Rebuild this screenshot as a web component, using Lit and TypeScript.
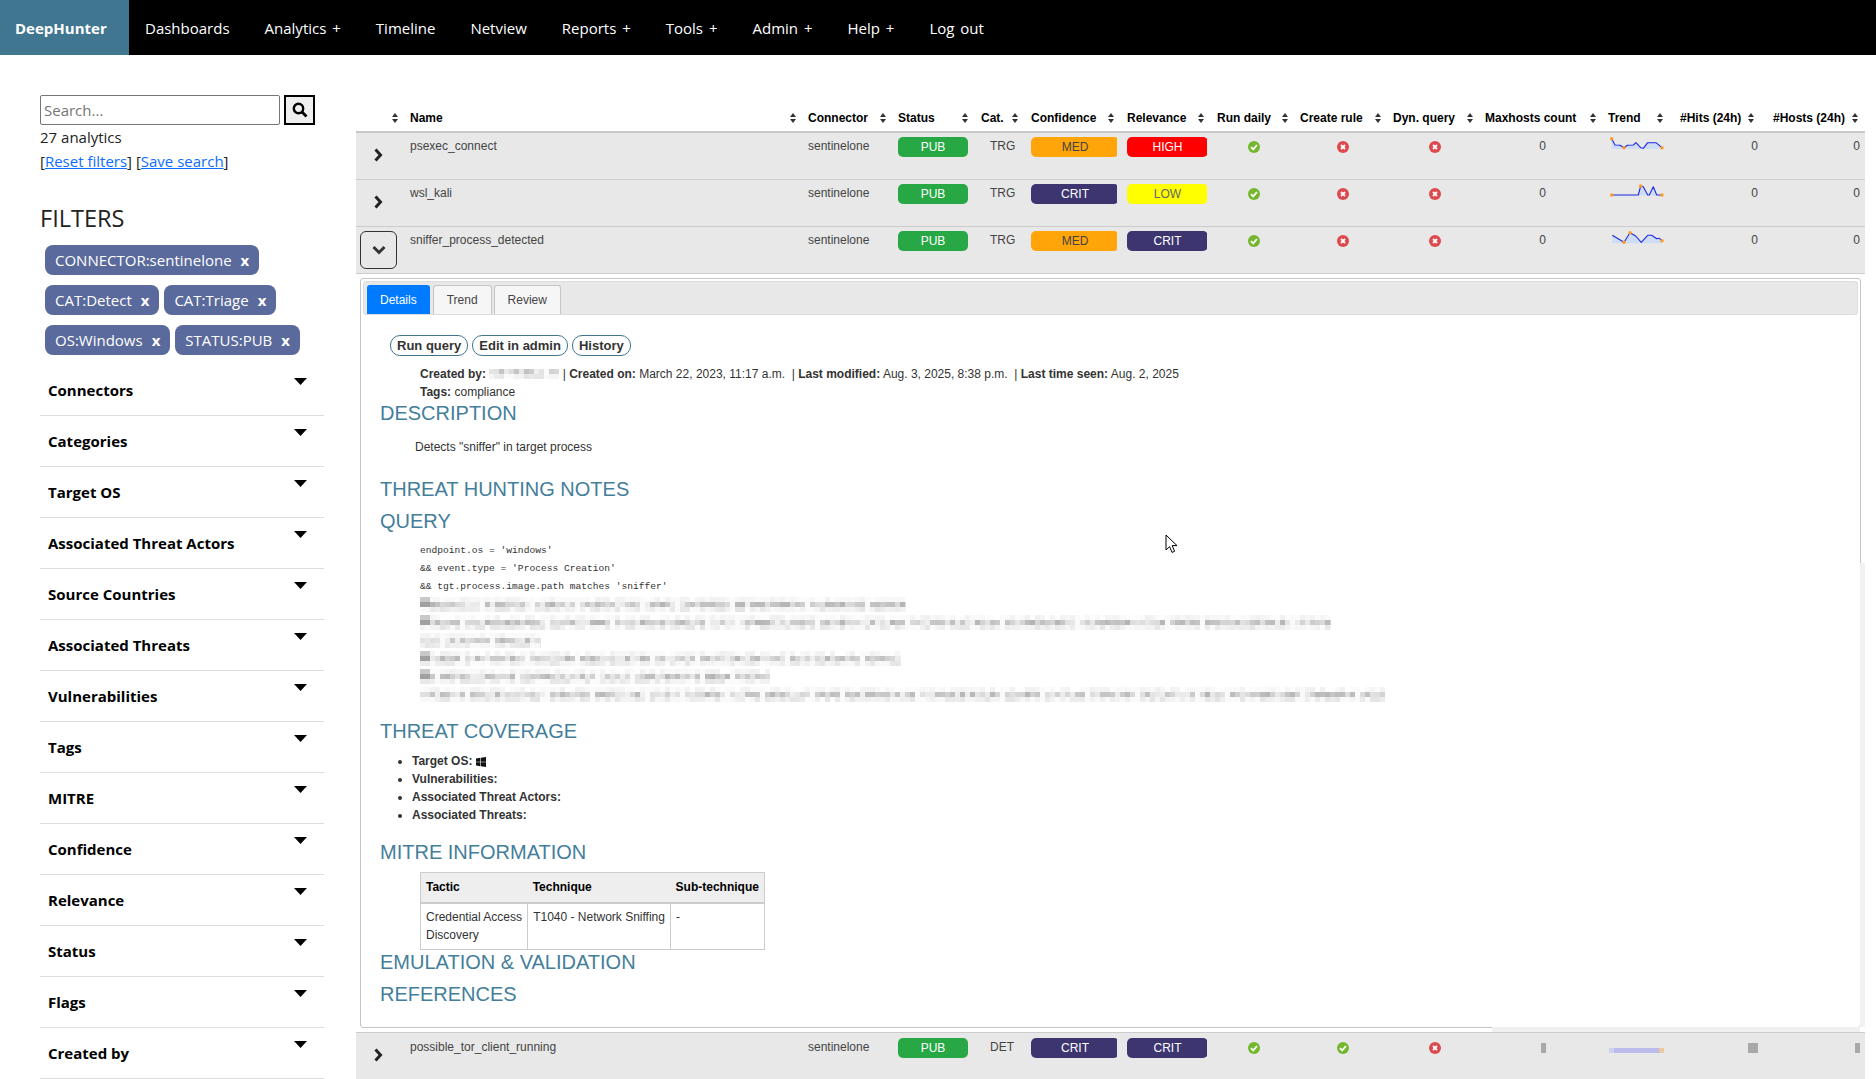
import { LitElement, html, svg, css } from "lit";
import { customElement } from "lit/decorators.js";

interface Col { label: string; width: number; arrowPad: number }
interface Row {
  name: string; cat: string; conf: string; rel: string;
  daily: boolean; rule: boolean; dyn: boolean;
  points: number[][]; dots: number[]; floor: number; open?: boolean; fuzzy?: boolean;
}

const NAV = ["Dashboards", "Analytics +", "Timeline", "Netview", "Reports +", "Tools +", "Admin +", "Help +", "Log out"];
const FILTERS = ["Connectors", "Categories", "Target OS", "Associated Threat Actors", "Source Countries", "Associated Threats", "Vulnerabilities", "Tags", "MITRE", "Confidence", "Relevance", "Status", "Flags", "Created by"];
const PILLS = [["CONNECTOR:sentinelone"], ["CAT:Detect", "CAT:Triage"], ["OS:Windows", "STATUS:PUB"]];

const COLS: Col[] = [
  { label: "", width: 44, arrowPad: 2 },
  { label: "Name", width: 398, arrowPad: 2 },
  { label: "Connector", width: 90, arrowPad: 2 },
  { label: "Status", width: 83, arrowPad: 3 },
  { label: "Cat.", width: 50, arrowPad: 3 },
  { label: "Confidence", width: 96, arrowPad: 3 },
  { label: "Relevance", width: 90, arrowPad: 3 },
  { label: "Run daily", width: 83, arrowPad: 2 },
  { label: "Create rule", width: 93, arrowPad: 2 },
  { label: "Dyn. query", width: 92, arrowPad: 2 },
  { label: "Maxhosts count", width: 123, arrowPad: 2 },
  { label: "Trend", width: 72, arrowPad: 7 },
  { label: "#Hits (24h)", width: 93, arrowPad: 9 },
  { label: "#Hosts (24h)", width: 102, arrowPad: 7 },
];

const ROWS: Row[] = [
  { name: "psexec_connect", cat: "TRG", conf: "MED", rel: "HIGH", daily: true, rule: false, dyn: false,
    points: [[2.7, 1.7], [6, 8], [11, 8.3], [15, 10.7], [18.3, 8.3], [24.3, 8], [27, 5.7], [31.7, 10.7], [34.3, 11.3], [38.7, 5.7], [47, 5.7], [53, 10.7]],
    dots: [0, 3, 11], floor: 12 },
  { name: "wsl_kali", cat: "TRG", conf: "CRIT", rel: "LOW", daily: true, rule: false, dyn: false,
    points: [[2.7, 11], [29.3, 11], [31.7, 2], [34.3, 2.7], [38.7, 11], [40.3, 11], [44.3, 2.7], [47.7, 11], [53, 11]],
    dots: [0, 2, 8], floor: 11.5 },
  { name: "sniffer_process_detected", cat: "TRG", conf: "MED", rel: "CRIT", daily: true, rule: false, dyn: false, open: true,
    points: [[3.3, 4.3], [15, 11.3], [21, 1.7], [26.7, 5], [32.3, 11.3], [38.7, 4.3], [42.7, 4.3], [47.7, 7.7], [50.3, 7.3], [53, 9.7]],
    dots: [1, 2, 9], floor: 12.3 },
];
const LAST: Row = { name: "possible_tor_client_running", cat: "DET", conf: "CRIT", rel: "CRIT", daily: true, rule: true, dyn: false, fuzzy: true, points: [], dots: [], floor: 0 };

const QUERY = ["endpoint.os = 'windows'", "&& event.type = 'Process Creation'", "&& tgt.process.image.path matches 'sniffer'"];
const BLURRED = [486, 911, 121, 481, 350, 965];

// the reference pixelates these lines, so tiles stand in for the hidden text
function mosaic(width: number, lead: boolean, rows = 3) {
  let seed = width * 7 + 3;
  const next = () => (seed = (seed * 9301 + 49297) % 233280) / 233280;
  const ranges = [[240, 255], [180, 240], [228, 252]].slice(3 - rows);
  const tiles = [];
  let word = 3 + Math.floor(next() * 10);
  for (let i = 0; i * 5 < width; i++) {
    const gap = word-- <= 0;
    if (gap) word = 5 + Math.floor(next() * 14);
    for (let r = 0; r < rows; r++) {
      const [lo, hi] = ranges[r];
      let v = gap ? 250 : Math.round(lo + next() * (hi - lo));
      if (lead && i < 2 && r < rows - 1) v = r === rows - 2 ? 160 : 200;
      tiles.push(svg`<rect x=${i * 5} y=${r * 5} width="5" height="5" fill=${`rgb(${v},${v},${v})`}></rect>`);
    }
  }
  return html`<svg class="mosaic" width=${width} height=${rows * 5}>${tiles}</svg>`;
}

const sortArrows = html`<svg class="sort" width="6" height="10" viewBox="0 0 6 10"><path d="M3 0 6 4H0zM3 10 0 6H6z" fill="#333"></path></svg>`;
const chevRight = html`<svg width="10" height="14" viewBox="0 0 10 14"><path d="M2.5 1.5 7.5 7 2.5 12.5" fill="none" stroke="#222" stroke-width="3"></path></svg>`;
const chevDown = html`<svg width="14" height="10" viewBox="0 0 14 10"><path d="M1.5 2 7 7.5 12.5 2" fill="none" stroke="#333" stroke-width="3"></path></svg>`;

function flag(on: boolean) {
  return on
    ? html`<svg class="flag" width="12" height="12" viewBox="0 0 12 12"><circle cx="6" cy="6" r="6" fill="#74b72e"></circle><path d="M3 6.2 5.2 8.4 9 4" fill="none" stroke="#fff" stroke-width="1.8"></path></svg>`
    : html`<svg class="flag" width="12" height="12" viewBox="0 0 12 12"><circle cx="6" cy="6" r="6" fill="#dc4a4f"></circle><path d="M4 4 8 8M8 4 4 8" fill="none" stroke="#fff" stroke-width="1.8"></path></svg>`;
}

function spark(r: Row) {
  const line = r.points.map((p) => p.join(",")).join(" ");
  const area = `${r.points[0][0]},${r.floor} ${line} ${r.points[r.points.length - 1][0]},${r.floor}`;
  return html`<svg class="spark" width="56" height="16" viewBox="0 0 56 16">
    <polygon points=${area} fill="#cfdcf8"></polygon>
    <polyline points=${line} fill="none" stroke="#1c2be0" stroke-width="1.1" stroke-linejoin="round"></polyline>
    ${r.dots.map((i) => svg`<circle cx=${r.points[i][0]} cy=${r.points[i][1]} r="1.7" fill="#ff9a1f"></circle>`)}
  </svg>`;
}

@customElement("app-root")
export class AppRoot extends LitElement {
  static styles = css`
    :host {
      display: block;
      height: 1079px;
      overflow: hidden;
      position: relative;
      font-family: "Liberation Sans", Arial, sans-serif;
      color: #333;
      background: #fff;
    }

    .nav {
      display: flex;
      align-items: center;
      height: 55px;
      background: #000;
      font-family: "Open Sans", sans-serif;
      font-size: 15px;
    }
    .brand {
      display: flex;
      align-items: center;
      height: 100%;
      width: 129px;
      box-sizing: border-box;
      padding-left: 15px;
      background: #417690;
      color: #fff;
      font-weight: 700;
    }
    .nav-items {
      display: flex;
      gap: 35px;
      padding-left: 16px;
      color: #fff;
      word-spacing: 2px;
    }

    .page {
      display: flex;
      align-items: flex-start;
    }

    .side {
      width: 284px;
      margin-left: 40px;
      margin-right: 32px;
      padding-top: 40px;
      flex: none;
      font-family: "Open Sans", sans-serif;
      font-size: 15px;
      color: #222;
    }
    .search {
      display: flex;
      gap: 4px;
    }
    .search-input {
      width: 240px;
      height: 30px;
      box-sizing: border-box;
      border: 1px solid #767676;
      border-radius: 2px;
      padding: 0 3px;
      line-height: 28px;
      color: #757575;
    }
    .search-btn {
      display: flex;
      align-items: center;
      justify-content: center;
      width: 31px;
      height: 30px;
      box-sizing: border-box;
      border: 2px solid #000;
      background: #efefef;
    }
    .count { line-height: 24px; margin-top: 0; }
    .links { line-height: 24px; }
    .links a { color: #0d6efd; text-decoration: underline; }
    .filters-title {
      margin: 30px 0 0;
      font-size: 23.5px;
      font-weight: 500;
      line-height: 31px;
    }
    .pills {
      display: flex;
      flex-direction: column;
      gap: 10px;
      padding: 11px 0 0 5px;
    }
    .pill-row { display: flex; gap: 5px; }
    .pill {
      display: flex;
      gap: 9px;
      align-items: center;
      height: 30px;
      padding: 0 10px;
      border-radius: 8px;
      background: #5a6a9c;
      color: #fff;
    }
    .pill b { font-weight: 700; }
    .filter-list { margin-top: 10px; }
    .filter {
      display: flex;
      justify-content: space-between;
      height: 50px;
      border-bottom: 1px solid #ddd;
      padding-left: 8px;
      font-weight: 700;
      color: #000;
    }
    .filter span { padding-top: 15px; line-height: 21px; }
    .filter svg { margin: 13px 17px 0 0; }

    .content { width: 1509px; flex: none; padding-top: 55px; }
    table {
      width: 1509px;
      table-layout: fixed;
      border-collapse: separate;
      border-spacing: 0;
      font-size: 12px;
    }
    th {
      height: 21px;
      padding: 0 0 0 10px;
      border-bottom: 2px solid #c8c8c8;
      vertical-align: top;
      color: #000;
      text-align: left;
    }
    .th {
      display: flex;
      justify-content: space-between;
      align-items: center;
      height: 16px;
      white-space: nowrap;
    }
    .th span { flex: 1; }
    .sort { flex: none; }

    .row td {
      height: 42px;
      padding: 4px 0 0 10px;
      background: #e8e8e8;
      border-bottom: 1px solid #ccc;
      vertical-align: top;
      line-height: 18px;
      color: #444;
      white-space: nowrap;
    }
    .row.last td { padding-top: 5px; }
    .row td.tog { padding-left: 3px; padding-top: 3px; height: 43px; }
    .toggle {
      display: flex;
      align-items: center;
      justify-content: center;
      width: 37px;
      height: 38px;
      box-sizing: border-box;
      border: 1px solid transparent;
      border-radius: 6px;
    }
    .toggle.open { border-color: #333; margin: 1px 0 0 1px; }
    .row td.cat { padding-left: 19px; }
    .badge {
      height: 20px;
      line-height: 21px;
      border-radius: 5px;
      text-align: center;
    }
    .b-status { width: 70px; }
    .b-conf { width: 88px; }
    .b-rel { width: 81px; }
    .PUB { background: #28a745; color: #fff; }
    .MED { background: #ffa50a; color: #444; }
    .CRIT { background: #3c3570; color: #fff; }
    .HIGH { background: #ff0000; color: #fff; }
    .LOW { background: #ffff00; color: #666; }
    .flag { display: block; margin-top: 4px; }
    .row td.f-daily { padding-left: 41px; }
    .row td.f-rule { padding-left: 47px; }
    .row td.f-dyn { padding-left: 46px; }
    .row td.num { padding-left: 0; padding-right: 5px; text-align: right; }
    .row td.num-max { padding-right: 52px; }
    .row td.trend { padding-left: 11px; }
    .spark { display: block; }
    .smudge {
      display: inline-block;
      height: 10px;
      margin-top: 5px;
      background: #a9a9a9;
    }
    .flat {
      display: block;
      width: 55px;
      height: 5px;
      margin-top: 10px;
      background: linear-gradient(to right, #cfcff0 5px, #bcbcec 5px, #bcbcec 50px, #eec9a0 50px);
    }

    td.detail {
      padding: 4px;
      border-bottom: 1px solid #ccc;
    }
    .panel {
      height: 750px;
      box-sizing: border-box;
      border: 1px solid #c5c5c5;
      border-radius: 3px;
      padding: 2px;
      overflow: hidden;
    }
    .tabs {
      display: flex;
      align-items: flex-end;
      gap: 2px;
      height: 34px;
      box-sizing: border-box;
      padding-left: 3px;
      background: #e8e8e8;
      border: 1px solid #ddd;
      border-radius: 3px;
    }
    .tab {
      height: 29px;
      box-sizing: border-box;
      padding: 0 13px;
      line-height: 28px;
      border: 1px solid #c5c5c5;
      border-bottom: none;
      border-radius: 3px 3px 0 0;
      background: #f6f6f6;
      color: #454545;
    }
    .tab.active {
      padding: 0 12px;
      margin-right: 1px;
      background: #007bff;
      border-color: #007bff;
      color: #fff;
    }

    .body { padding: 20px 0 0 18px; color: #333; }
    .actions { display: flex; gap: 4px; padding-left: 9px; margin-bottom: 9px; }
    .action {
      height: 21px;
      box-sizing: border-box;
      padding: 0 6px;
      border: 1px solid #417690;
      border-radius: 10px;
      font-size: 13px;
      line-height: 19px;
      font-weight: 700;
      color: #333;
    }
    .meta { padding-left: 39px; line-height: 18px; white-space: nowrap; }
    .meta b { font-weight: 700; }
    .meta .mosaic { vertical-align: -1px; }
    .meta.tags { margin-bottom: 1px; }
    h2 {
      margin: 0 0 0 -1px;
      color: #447e9b;
      font-size: 20px;
      font-weight: 400;
      line-height: 22px;
    }
    .desc { padding-left: 34px; margin: 14px 0 22px; line-height: 18px; }
    .h-query { margin-top: 10px; }
    .code {
      margin: 10px 0 16px;
      padding-left: 39px;
      font-family: "Liberation Mono", monospace;
      font-size: 9.6px;
      line-height: 18px;
    }
    .code div { height: 18px; }
    .code .mosaic { display: block; padding-top: 1px; }
    ul {
      margin: 10px 0 17px;
      padding-left: 31px;
      font-weight: 700;
      line-height: 18px;
    }
    ul svg { vertical-align: -2px; }
    .mitre {
      width: 345px;
      margin: 9px 0 1px 39px;
      table-layout: auto;
      border-collapse: collapse;
    }
    .mitre th, .mitre td {
      padding: 2px 5px;
      border: 1px solid #ccc;
      line-height: 18px;
      vertical-align: top;
      white-space: nowrap;
      height: auto;
    }
    .mitre th {
      padding: 5px 5px 6px;
      background: #eee;
      border-width: 1px 0;
      border-bottom: 2px solid #ccc;
    }
    .mitre th:first-child { border-left: 1px solid #ccc; }
    .mitre th:last-child { border-right: 1px solid #ccc; }
    .mitre td { padding: 4px 5px 5px; }
    .h-ref { margin-top: 10px; }

    .cursor { position: absolute; left: 1165px; top: 534px; }
    .track-x {
      position: absolute;
      left: 1492px;
      top: 1027px;
      width: 368px;
      height: 5px;
      background: #f1f1f1;
    }
    .track-y {
      position: absolute;
      left: 1860px;
      top: 563px;
      width: 5px;
      height: 464px;
      background: #f1f1f1;
    }
  `;

  renderRow(r: Row, last = false) {
    return html`
      <tr class="row ${last ? "last" : ""}">
        <td class="tog"><div class="toggle ${r.open ? "open" : ""}">${r.open ? chevDown : chevRight}</div></td>
        <td>${r.name}</td>
        <td>sentinelone</td>
        <td><div class="badge b-status PUB">PUB</div></td>
        <td class="cat">${r.cat}</td>
        <td><div class="badge b-conf ${r.conf}">${r.conf}</div></td>
        <td><div class="badge b-rel ${r.rel}">${r.rel}</div></td>
        <td class="f-daily">${flag(r.daily)}</td>
        <td class="f-rule">${flag(r.rule)}</td>
        <td class="f-dyn">${flag(r.dyn)}</td>
        <td class="num num-max">${r.fuzzy ? html`<span class="smudge" style="width:5px"></span>` : "0"}</td>
        <td class="trend">${r.fuzzy ? html`<span class="flat"></span>` : spark(r)}</td>
        <td class="num">${r.fuzzy ? html`<span class="smudge" style="width:10px"></span>` : "0"}</td>
        <td class="num">${r.fuzzy ? html`<span class="smudge" style="width:5px"></span>` : "0"}</td>
      </tr>
    `;
  }

  renderDetail() {
    return html`
      <tr>
        <td class="detail" colspan="14">
          <div class="panel">
            <div class="tabs">
              <div class="tab active">Details</div>
              <div class="tab">Trend</div>
              <div class="tab">Review</div>
            </div>
            <div class="body">
              <div class="actions">
                <div class="action">Run query</div>
                <div class="action">Edit in admin</div>
                <div class="action">History</div>
              </div>
              <div class="meta">
                <b>Created by:</b> ${mosaic(70, false, 2)} | <b>Created on:</b> March 22, 2023, 11:17 a.m. &nbsp;| <b>Last modified:</b> Aug. 3, 2025, 8:38 p.m. &nbsp;| <b>Last time seen:</b> Aug. 2, 2025
              </div>
              <div class="meta tags"><b>Tags:</b> compliance</div>
              <h2>DESCRIPTION</h2>
              <div class="desc">Detects "sniffer" in target process</div>
              <h2>THREAT HUNTING NOTES</h2>
              <h2 class="h-query">QUERY</h2>
              <div class="code">
                ${QUERY.map((l) => html`<div>${l}</div>`)}
                ${BLURRED.map((w, i) => html`<div>${mosaic(w, i !== 2 && i !== 5)}</div>`)}
              </div>
              <h2>THREAT COVERAGE</h2>
              <ul>
                <li>Target OS: <svg width="10" height="10" viewBox="0 0 10 10"><path d="M0 1.4 4.4.8V4.7H0zM5 .7 10 0V4.7H5zM0 5.3H4.4V9.2L0 8.6zM5 5.3H10V10L5 9.3z" fill="#111"></path></svg></li>
                <li>Vulnerabilities:</li>
                <li>Associated Threat Actors:</li>
                <li>Associated Threats:</li>
              </ul>
              <h2>MITRE INFORMATION</h2>
              <table class="mitre">
                <tr><th>Tactic</th><th>Technique</th><th>Sub-technique</th></tr>
                <tr>
                  <td>Credential Access<br />Discovery</td>
                  <td>T1040 - Network Sniffing</td>
                  <td>-</td>
                </tr>
              </table>
              <h2>EMULATION &amp; VALIDATION</h2>
              <h2 class="h-ref">REFERENCES</h2>
            </div>
          </div>
        </td>
      </tr>
    `;
  }

  render() {
    return html`
      <div class="nav">
        <div class="brand">DeepHunter</div>
        <div class="nav-items">${NAV.map((n) => html`<span>${n}</span>`)}</div>
      </div>
      <div class="page">
        <div class="side">
          <div class="search">
            <div class="search-input">Search...</div>
            <div class="search-btn">
              <svg width="16" height="16" viewBox="0 0 16 16"><circle cx="6.5" cy="6.5" r="4.7" fill="none" stroke="#000" stroke-width="2.4"></circle><path d="M10 10 14.5 14.5" stroke="#000" stroke-width="2.8"></path></svg>
            </div>
          </div>
          <div class="count">27 analytics</div>
          <div class="links">[<a>Reset filters</a>] [<a>Save search</a>]</div>
          <h3 class="filters-title">FILTERS</h3>
          <div class="pills">
            ${PILLS.map((row) => html`
              <div class="pill-row">
                ${row.map((p) => html`<div class="pill">${p} <b>x</b></div>`)}
              </div>
            `)}
          </div>
          <div class="filter-list">
            ${FILTERS.map((f) => html`
              <div class="filter">
                <span>${f}</span>
                <svg width="13" height="7" viewBox="0 0 13 7"><path d="M0 0H13L6.5 7z" fill="#000"></path></svg>
              </div>
            `)}
          </div>
        </div>
        <div class="content">
          <table>
            <colgroup>${COLS.map((c) => html`<col style="width:${c.width}px" />`)}</colgroup>
            <thead>
              <tr>
                ${COLS.map((c) => html`
                  <th style="padding-right:${c.arrowPad}px">
                    <div class="th"><span>${c.label}</span>${sortArrows}</div>
                  </th>
                `)}
              </tr>
            </thead>
            <tbody>
              ${ROWS.map((r) => this.renderRow(r))}
              ${this.renderDetail()}
              ${this.renderRow(LAST, true)}
            </tbody>
          </table>
        </div>
      </div>
      <div class="track-x"></div>
      <div class="track-y"></div>
      <svg class="cursor" width="14" height="20" viewBox="0 0 14 20"><path d="M1 1V16L4.6 12.6 7 18.4 9.6 17.3 7.2 11.6H12z" fill="#fff" stroke="#000" stroke-width="1"></path></svg>
    `;
  }
}
